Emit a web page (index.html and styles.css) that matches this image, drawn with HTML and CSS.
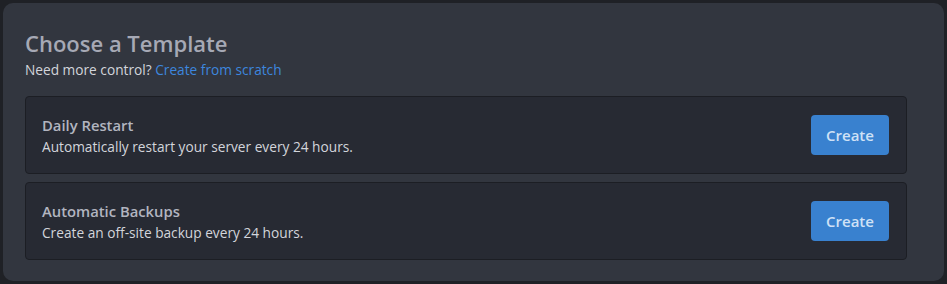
FILE: index.html
```html
<!DOCTYPE html>
<html lang="en">
<head>
  <meta charset="UTF-8" />
  <title>Choose a Template</title>
  <link rel="stylesheet" href="styles.css">
</head>
<body>
  <div class="panel">
    <h2>Choose a Template</h2>
    <p class="sub">Need more control? <a href="#">Create from scratch</a></p>

    <div class="template">
      <div class="info">
        <h3>Daily Restart</h3>
        <p>Automatically restart your server every 24 hours.</p>
      </div>
      <button>Create</button>
    </div>

    <div class="template">
      <div class="info">
        <h3>Automatic Backups</h3>
        <p>Create an off-site backup every 24 hours.</p>
      </div>
      <button>Create</button>
    </div>
  </div>
</body>
</html>
```

FILE: styles.css
```css
body {
  margin: 0;
  background: #1f2126;
  font-family: "Open Sans", "Noto Sans", sans-serif;
}
.panel {
  margin: 3px;
  height: 278px;
  box-sizing: border-box;
  background: #32363f;
  border-radius: 10px;
  padding: 25px 37px 20px 22px;
}
h2 {
  margin: 0;
  font-size: 22px;
  font-weight: 600;
  color: #a6a9b5;
  line-height: 30px;
}
.sub {
  margin: 2px 0 0;
  font-size: 13.7px;
  color: #d3d5db;
  line-height: 20px;
}
.sub a {
  color: #3d86de;
  text-decoration: none;
}
.template {
  display: flex;
  align-items: center;
  justify-content: space-between;
  background: #272a33;
  border: 1px solid #1c1e24;
  border-radius: 4px;
  height: 78px;
  box-sizing: border-box;
  padding: 2px 17px 0 16px;
  margin-top: 16px;
}
.template + .template {
  margin-top: 8px;
}
.template h3 {
  margin: 0;
  font-size: 14.8px;
  font-weight: 600;
  color: #b2b5c0;
  line-height: 20px;
}
.template p {
  margin: 2px 0 0;
  font-size: 13.7px;
  color: #d3d5db;
  line-height: 20px;
}
button {
  width: 78px;
  height: 40px;
  margin-top: -2px;
  border: none;
  border-radius: 4px;
  background: #3981cf;
  color: #cfe1f6;
  font-family: inherit;
  font-size: 15px;
  font-weight: 600;
}
```
